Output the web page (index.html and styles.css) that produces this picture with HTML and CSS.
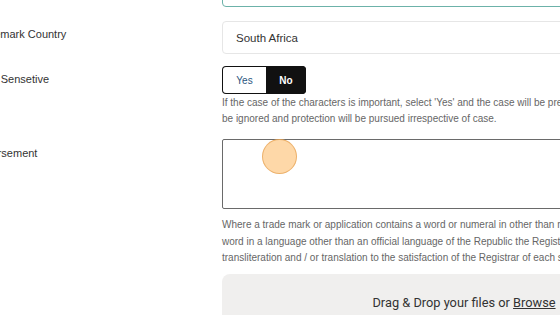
FILE: index.html
```html
<!DOCTYPE html>
<html lang="en">
<head>
    <meta charset="UTF-8">
    <meta name="viewport" content="width=device-width, initial-scale=1.0">
    <title>Trademark Application</title>
    <link rel="stylesheet" href="styles.css">
</head>
<body>
    <div class="form">
        <div class="row row-first">
            <label class="label"></label>
            <div class="field">
                <input type="text" class="input input-focus">
            </div>
        </div>

        <div class="row">
            <label class="label">Trademark Country</label>
            <div class="field">
                <div class="input select">South Africa</div>
            </div>
        </div>

        <div class="row row-toggle">
            <label class="label">Case Sensetive</label>
            <div class="field">
                <div class="toggle">
                    <button class="toggle-btn yes">Yes</button>
                    <button class="toggle-btn no active">No</button>
                </div>
                <p class="help">If the case of the characters is important, select 'Yes' and the case will be preserved. If 'No', the case will<br>be ignored and protection will be pursued irrespective of case.</p>
            </div>
        </div>

        <div class="row row-area">
            <label class="label">Endorsement</label>
            <div class="field">
                <textarea class="textarea"></textarea>
                <p class="help help-long">Where a trade mark or application contains a word or numeral in other than roman characters, or a<br>word in a language other than an official language of the Republic the Registrar shall require a<br>transliteration and / or translation to the satisfaction of the Registrar of each such word or numeral.</p>
                <div class="dropzone">Drag &amp; Drop your files or <span class="browse">Browse</span></div>
            </div>
        </div>
    </div>

    <!-- click highlight -->
    <div class="cursor"></div>
</body>
</html>
```

FILE: styles.css
```css
body {
    font-family: "Liberation Sans", Arial, sans-serif;
    margin: 0;
    background-color: #ffffff;
    color: #333;
    overflow: hidden;
    height: 315px;
}

.form {
    margin-left: -28px;
    margin-top: -27px;
    width: 760px;
}

.row {
    display: grid;
    grid-template-columns: 250px 484px;
    margin-bottom: 12px;
}

.row-first {
    margin-bottom: 14px;
}

.label {
    font-size: 11px;
    line-height: 16px;
    color: #333;
    padding-top: 5px;
}

.row-area .label {
    padding-top: 6px;
}

.input {
    box-sizing: border-box;
    width: 100%;
    height: 33px;
    border: 1px solid #e6e6e6;
    border-radius: 4px;
    font-family: "Liberation Sans", Arial, sans-serif;
    font-size: 11px;
    background: #fff;
}

.input-focus {
    height: 34px;
    border-color: #6cb2a9;
    outline: none;
}

.select {
    display: flex;
    align-items: center;
    padding-left: 13px;
    font-size: 11.5px;
    color: #333;
}

.toggle {
    display: flex;
    width: 84px;
    height: 28px;
    border-radius: 4px;
    overflow: hidden;
    background: #111;
}

.toggle-btn {
    font-family: "Liberation Sans", Arial, sans-serif;
    font-size: 10px;
    border: none;
    padding: 0;
    cursor: pointer;
}

.toggle-btn.yes {
    width: 43px;
    margin: 1px 0 1px 1px;
    background: #fff;
    color: #2b5680;
    border-radius: 3px 0 0 3px;
}

.toggle-btn.no {
    flex: 1;
    background: #111;
    color: #fff;
    font-weight: bold;
}

.help {
    margin: 1px 0 0;
    font-size: 10px;
    line-height: 16px;
    color: #666;
    white-space: nowrap;
}

.textarea {
    display: block;
    box-sizing: border-box;
    width: 100%;
    height: 70px;
    border: 1px solid #6a6a6a;
    border-radius: 2px;
    resize: none;
}

.help-long {
    margin-top: 8px;
    line-height: 16.5px;
}

.dropzone {
    margin-top: 7px;
    height: 80px;
    padding-top: 20px;
    box-sizing: border-box;
    background: #f0efee;
    border-radius: 8px;
    text-align: center;
    font-family: Roboto, "Liberation Sans", sans-serif;
    font-size: 12.8px;
    line-height: 18px;
    color: #333;
}

.browse {
    text-decoration: underline;
}

.cursor {
    position: absolute;
    left: 262px;
    top: 139px;
    width: 35px;
    height: 35px;
    border-radius: 50%;
    background: rgba(253, 190, 110, 0.6);
    border: 1px solid rgba(230, 160, 80, 0.7);
    box-sizing: border-box;
}
```
